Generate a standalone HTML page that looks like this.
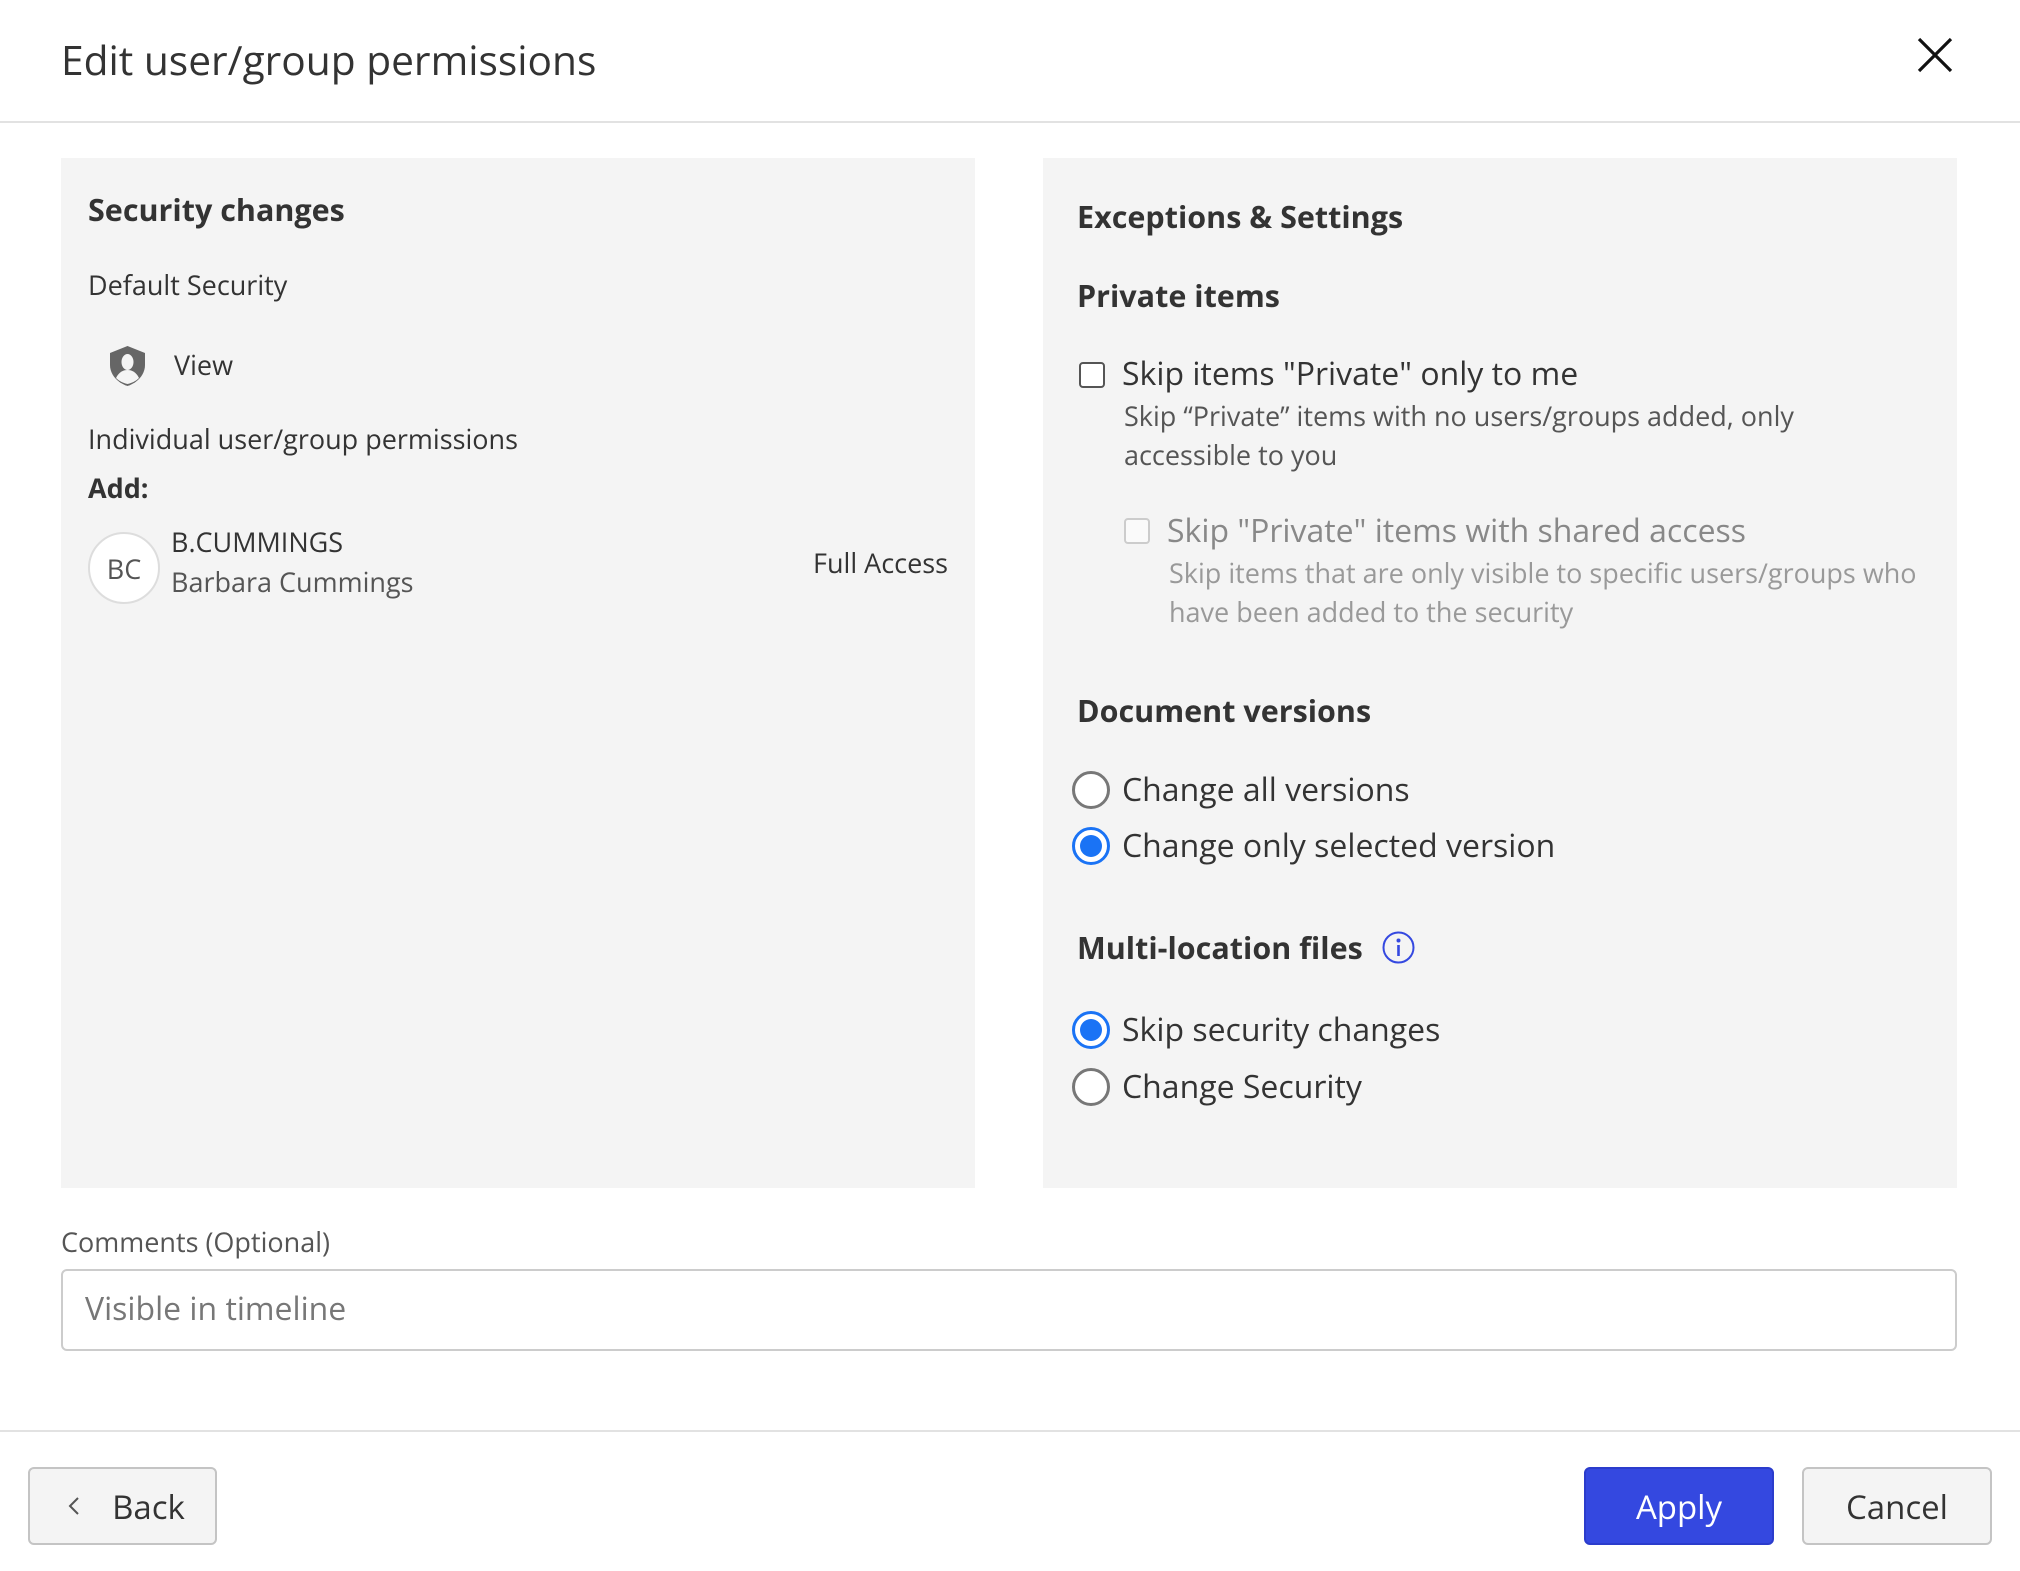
<!DOCTYPE html>
<html><head><meta charset="utf-8"><style>
*{margin:0;padding:0;box-sizing:border-box}
body{width:2020px;height:1571px;background:#fff;position:relative;overflow:hidden;font-family:"Open Sans","Liberation Sans",sans-serif;color:#333}
.a{position:absolute;white-space:nowrap}
.panel{position:absolute;top:158px;height:1030px;background:#f4f4f4}
.h{font-weight:bold;font-size:30.5px;color:#333}
.t{font-size:27px;color:#333}
.l{font-size:32px;color:#333}
.d{font-size:27px;color:#555}
.radio{position:absolute;width:38px;height:38px;border-radius:50%;border:3px solid #777;background:#fff}
.radio.on{border:3px solid #1a73f5}
.radio.on::after{content:"";position:absolute;left:5px;top:5px;width:22px;height:22px;border-radius:50%;background:#1a73f5}
.btn{position:absolute;top:1467px;height:78px;border-radius:6px;font-size:33px;display:flex;align-items:center;justify-content:center}
</style></head><body>
<div class="a" style="left:61px;top:33px;font-size:40.7px;color:#333;line-height:52px">Edit user/group permissions</div>
<svg class="a" style="left:1916px;top:36px" width="38" height="38" viewBox="0 0 38 38"><path d="M3 3L35 35M35 3L3 35" stroke="#111" stroke-width="3.2" fill="none"/></svg>
<div class="a" style="left:0;top:121px;width:2020px;height:2px;background:#e2e2e2"></div>

<div class="panel" style="left:61px;width:914px"></div>
<div class="panel" style="left:1043px;width:914px"></div>

<div class="a h" style="left:88px;top:190px;line-height:38px">Security changes</div>
<div class="a t" style="left:88px;top:266px;line-height:38px">Default Security</div>
<svg class="a" style="left:108px;top:345px" width="39" height="42" viewBox="0 0 39 42"><path d="M19.5 1L37 8V20C37 30 29 38 19.5 41C10 38 2 30 2 20V8Z" fill="#666"/><ellipse cx="19.5" cy="17" rx="6" ry="8" fill="#f4f4f4"/><path d="M8 33C11 27 15 25 19.5 25C24 25 28 27 31 33C28 36 24 38 19.5 39C15 38 11 36 8 33Z" fill="#f4f4f4"/></svg>
<div class="a t" style="left:174px;top:346px;line-height:38px">View</div>
<div class="a t" style="left:88px;top:420px;line-height:38px">Individual user/group permissions</div>
<div class="a t" style="left:88px;top:469px;line-height:38px;font-weight:bold">Add:</div>
<div class="a" style="left:88px;top:532px;width:72px;height:72px;border-radius:50%;border:2px solid #ddd;background:#fff;font-size:27px;color:#555;display:flex;align-items:center;justify-content:center">BC</div>
<div class="a t" style="left:171px;top:523px;line-height:38px">B.CUMMINGS</div>
<div class="a t" style="left:171px;top:563px;line-height:38px;color:#555">Barbara Cummings</div>
<div class="a t" style="right:1072px;top:544px;line-height:38px">Full Access</div>

<div class="a h" style="left:1077px;top:197px;line-height:38px">Exceptions &amp; Settings</div>
<div class="a h" style="left:1077px;top:276px;line-height:38px">Private items</div>
<div class="a" style="left:1079px;top:362px;width:26px;height:26px;border:2.5px solid #555;border-radius:4px;background:#fff"></div>
<div class="a l" style="left:1122px;top:354px;line-height:40px">Skip items "Private" only to me</div>
<div class="a d" style="left:1124px;top:396px;line-height:39px">Skip “Private” items with no users/groups added, only<br>accessible to you</div>
<div class="a" style="left:1124px;top:518px;width:26px;height:26px;border:2.5px solid #ccc;border-radius:4px;background:#fafafa"></div>
<div class="a l" style="left:1167px;top:511px;line-height:40px;color:#888">Skip "Private" items with shared access</div>
<div class="a d" style="left:1169px;top:553px;line-height:39px;color:#999">Skip items that are only visible to specific users/groups who<br>have been added to the security</div>

<div class="a h" style="left:1077px;top:691px;line-height:38px">Document versions</div>
<div class="radio" style="left:1072px;top:771px"></div>
<div class="a l" style="left:1122px;top:770px;line-height:40px">Change all versions</div>
<div class="radio on" style="left:1072px;top:827px"></div>
<div class="a l" style="left:1122px;top:826px;line-height:40px">Change only selected version</div>
<div class="a h" style="left:1077px;top:928px;line-height:38px">Multi-location files</div>
<svg class="a" style="left:1382px;top:931px" width="33" height="33" viewBox="0 0 33 33"><circle cx="16.5" cy="16.5" r="15" stroke="#3448e0" stroke-width="2" fill="none"/><circle cx="16.5" cy="9.5" r="2" fill="#3448e0"/><path d="M16.5 14V25" stroke="#3448e0" stroke-width="2.6"/></svg>
<div class="radio on" style="left:1072px;top:1011px"></div>
<div class="a l" style="left:1122px;top:1010px;line-height:40px">Skip security changes</div>
<div class="radio" style="left:1072px;top:1068px"></div>
<div class="a l" style="left:1122px;top:1067px;line-height:40px">Change Security</div>

<div class="a d" style="left:61px;top:1223px;line-height:38px">Comments (Optional)</div>
<div class="a" style="left:61px;top:1269px;width:1896px;height:82px;border:2px solid #ccc;border-radius:6px;background:#fff"></div>
<div class="a" style="left:85px;top:1289px;font-size:32px;color:#777;line-height:40px">Visible in timeline</div>

<div class="a" style="left:0;top:1430px;width:2020px;height:2px;background:#e2e2e2"></div>
<div class="btn" style="left:28px;width:189px;background:#f4f4f4;border:2px solid #c4c4c4;color:#333;padding-left:8px"><svg width="12" height="20" viewBox="0 0 12 20" style="margin-right:32px"><path d="M10 2L2 10L10 18" stroke="#555" stroke-width="2" fill="none"/></svg>Back</div>
<div class="btn" style="left:1584px;width:190px;background:#3448e0;color:#fff;border:2px solid #2b3ccc">Apply</div>
<div class="btn" style="left:1802px;width:190px;background:#f4f4f4;border:2px solid #c4c4c4;color:#333">Cancel</div>
</body></html>
